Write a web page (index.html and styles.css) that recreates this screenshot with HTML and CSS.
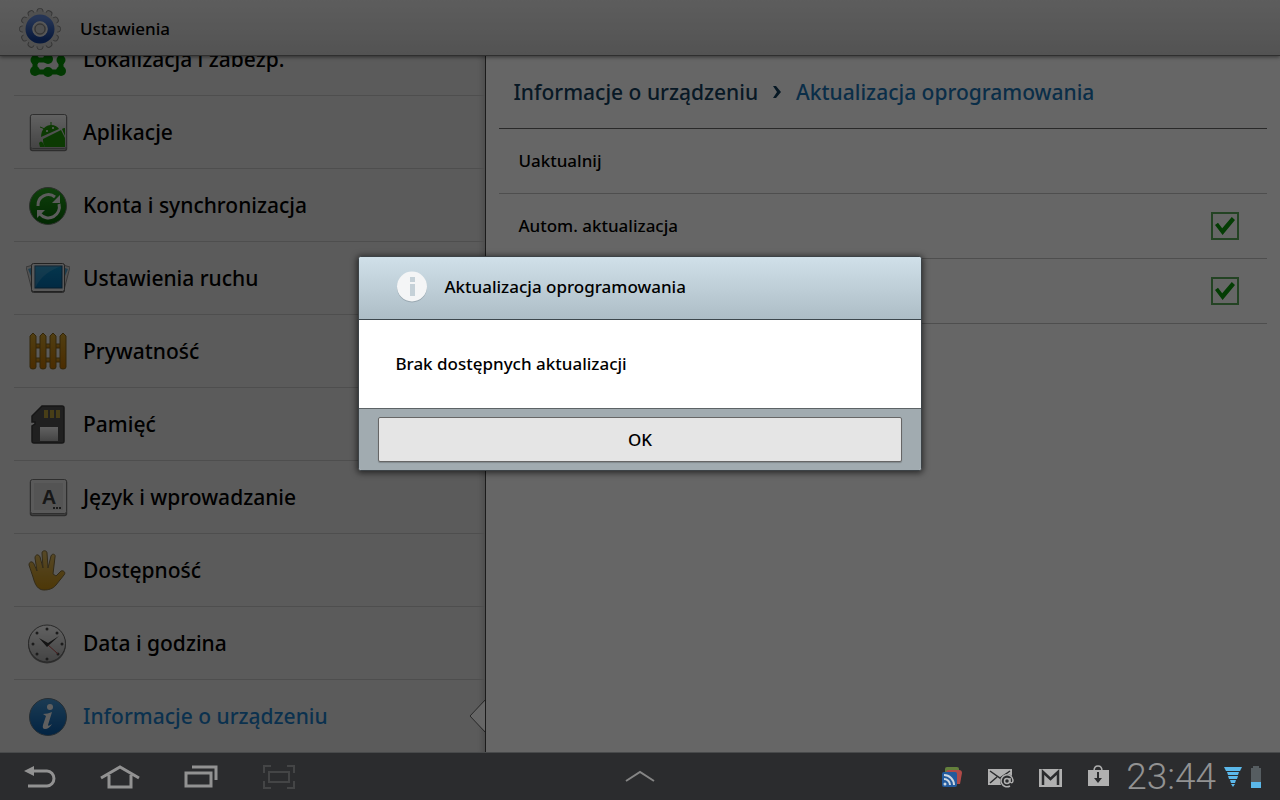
FILE: index.html
```html
<!DOCTYPE html>
<html lang="pl">
<head>
    <meta charset="UTF-8">
    <meta name="viewport" content="width=device-width, initial-scale=1.0">
    <title>Ustawienia</title>
    <link rel="stylesheet" href="styles.css">
</head>
<body>
    <div class="screen">
        <header class="title-bar">
            <svg class="icon" viewBox="0 0 44 44">
                <defs>
                    <linearGradient id="silver" x1="0" y1="0" x2="0" y2="1"><stop offset="0" stop-color="#f4f4f4"/><stop offset="1" stop-color="#aaa"/></linearGradient>
                    <linearGradient id="ring" x1="0" y1="0" x2="0" y2="1"><stop offset="0" stop-color="#5f86d4"/><stop offset="1" stop-color="#153f96"/></linearGradient>
                </defs>
                <g fill="#c8c8c8" stroke="#888">
                    <rect x="19" y="1.500" width="6" height="41" rx="2.500"/>
                    <rect x="19" y="1.500" width="6" height="41" rx="2.500" transform="rotate(30 22 22)"/>
                    <rect x="19" y="1.500" width="6" height="41" rx="2.500" transform="rotate(60 22 22)"/>
                    <rect x="19" y="1.500" width="6" height="41" rx="2.500" transform="rotate(90 22 22)"/>
                    <rect x="19" y="1.500" width="6" height="41" rx="2.500" transform="rotate(120 22 22)"/>
                    <rect x="19" y="1.500" width="6" height="41" rx="2.500" transform="rotate(150 22 22)"/>
                </g>
                <circle cx="22" cy="22" r="17.500" fill="#c8c8c8"/>
                <circle cx="22" cy="22" r="11" fill="#bbb" stroke="url(#ring)" stroke-width="7"/>
                <circle cx="22" cy="22" r="7" fill="none" stroke="#ddd" stroke-width="1.500"/>
                <circle cx="22" cy="22" r="5" fill="#c8c8c8" stroke="#777"/>
            </svg>
            <h1 class="title">Ustawienia</h1>
        </header>

        <main class="content">
            <nav class="sidebar">
                <a class="item" href="#">
                    <svg class="icon" viewBox="0 0 44 44">
                        <g stroke="#059005" stroke-width="5" fill="none"><path d="M9 11H35V35H9ZM22 11V23M9 23H20"/></g>
                        <g fill="#059005"><circle cx="9" cy="11" r="4.500"/><circle cx="22" cy="11" r="4.500"/><circle cx="35" cy="11" r="4.500"/><circle cx="9" cy="23" r="4.500"/><circle cx="22" cy="22" r="5"/><circle cx="35" cy="23" r="4.500"/><circle cx="9" cy="34" r="5"/><circle cx="22" cy="35" r="5"/><circle cx="35" cy="34" r="5"/></g>
                    </svg>
                    <span>Lokalizacja i zabezp.</span>
                </a>
                <a class="item" href="#">
                    <svg class="icon" viewBox="0 0 44 44">
                        <rect x="4.500" y="5.500" width="36" height="35" rx="2" fill="#b5b5b5" stroke="#707070" stroke-width="1.500"/>
                        <rect x="4.500" y="4.500" width="36" height="34" rx="2" fill="url(#silver)" stroke="#777"/>
                        <g fill="#1f9208">
                            <path d="M15 27C15 19 20 15 25 15C29 15 32 17 33 19Z"/>
                            <path d="M17 29L35 20L39 28V37H19C17 34 17 31 17 29Z"/>
                            <path d="M13 33Q15 30 17 33L19 37H14ZM36 19Q37 18 39 18V26Z"/>
                        </g>
                        <path d="M19 19L14 17M25 16V12" stroke="#1f9208"/>
                        <circle cx="21" cy="21" r="1" fill="#eee"/><circle cx="27" cy="18" r="1" fill="#eee"/>
                    </svg>
                    <span>Aplikacje</span>
                </a>
                <a class="item" href="#">
                    <svg class="icon" viewBox="0 0 44 44">
                        <defs><linearGradient id="green" x1="0" y1="0" x2="0" y2="1"><stop offset="0" stop-color="#25a01d"/><stop offset="1" stop-color="#056205"/></linearGradient></defs>
                        <circle cx="22" cy="23" r="18.500" fill="url(#green)" stroke="#6b776b"/>
                        <g fill="none" stroke="#e6e6e6" stroke-width="3"><path d="M12 23A10.500 10.500 0 0 1 29 14M33 21A11 11 0 0 1 14 31"/></g>
                        <path d="M34 12V20H26ZM11 35V27H19Z" fill="#e6e6e6"/>
                    </svg>
                    <span>Konta i synchronizacja</span>
                </a>
                <a class="item" href="#">
                    <svg class="icon" viewBox="0 0 44 44">
                        <defs><linearGradient id="screen" x1="0" y1="0" x2="0" y2="1"><stop offset="0" stop-color="#0b87c0"/><stop offset="1" stop-color="#056aa8"/></linearGradient></defs>
                        <path d="M0 11L7 9L12 35L6 34ZM44 11L37 9L32 35L38 34Z" fill="#d0d0d0" stroke="#8a8a8a"/>
                        <path d="M2 13L8 11L10 32ZM42 13L36 11L34 32Z" fill="#4f9cc4"/>
                        <rect x="5.500" y="8.500" width="33" height="28" rx="2" fill="#999" stroke="#6b6b6b"/>
                        <rect x="5.500" y="7.500" width="33" height="28" rx="2" fill="#dedede" stroke="#555"/>
                        <rect x="9" y="10" width="27" height="22" fill="url(#screen)" stroke="#154a70"/>
                        <path d="M9 10H36C24 14 15 20 9 32Z" fill="#fff" opacity=".15"/>
                    </svg>
                    <span>Ustawienia ruchu</span>
                </a>
                <a class="item" href="#">
                    <svg class="icon" viewBox="0 0 44 44">
                        <defs><linearGradient id="wood" x1="0" y1="0" x2="0" y2="1"><stop offset="0" stop-color="#c99d2d"/><stop offset="1" stop-color="#bd7003"/></linearGradient></defs>
                        <g fill="url(#wood)" stroke="#80601d">
                            <rect x="6" y="15" width="32" height="4"/><rect x="6" y="29" width="32" height="4"/>
                            <path d="M4 7L7 4L10 7V38Q10 40 7 40Q4 40 4 38Z"/>
                            <path d="M14 7L17 4L20 7V38Q20 40 17 40Q14 40 14 38Z"/>
                            <path d="M24 7L27 4L30 7V38Q30 40 27 40Q24 40 24 38Z"/>
                            <path d="M34 7L37 4L40 7V38Q40 40 37 40Q34 40 34 38Z"/>
                        </g>
                    </svg>
                    <span>Prywatność</span>
                </a>
                <a class="item" href="#">
                    <svg class="icon" viewBox="0 0 44 44">
                        <path d="M16 4H36Q38 4 38 6V39Q38 41 36 41H8Q6 41 6 39V24L9 22V20H6V14Z" fill="#505050" stroke="#383838" stroke-width="1.500"/>
                        <path d="M18 8H22V16H18ZM24 8H28V16H24ZM30 8H34V16H30Z" fill="#b59b3a"/>
                        <rect x="14" y="25" width="18" height="14" fill="url(#silver)"/>
                    </svg>
                    <span>Pamięć</span>
                </a>
                <a class="item" href="#">
                    <svg class="icon" viewBox="0 0 44 44">
                        <rect x="4.500" y="5.500" width="36" height="35" rx="2" fill="#aaa" stroke="#707070" stroke-width="1.500"/>
                        <rect x="4.500" y="4.500" width="36" height="34" rx="2" fill="#e2e2e2" stroke="#777"/>
                        <rect x="8" y="8" width="29" height="27" fill="#d2d2d2"/>
                        <text class="key-letter" x="23" y="29" text-anchor="middle">A</text>
                        <path d="M27 32h2v2h-2zM30 32h2v2h-2zM33 32h2v2h-2z" fill="#444"/>
                    </svg>
                    <span>Język i wprowadzanie</span>
                </a>
                <a class="item" href="#">
                    <svg class="icon" viewBox="0 0 44 44">
                        <defs><linearGradient id="skin" x1="0" y1="0" x2="0" y2="1"><stop offset="0" stop-color="#d9b763"/><stop offset="1" stop-color="#c08a12"/></linearGradient></defs>
                        <path d="M7 29L3 17C3 13 7 13 8 16L11 23L9 10C9 6 13 6 14 9L17 20L16 5C16 2 21 2 21 5L22 20L25 8C26 5 30 6 29 9L27 26L30 28L35 23C38 22 40 25 38 27L30 37C27 41 22 42 18 42C12 42 9 37 7 29Z" fill="url(#skin)" stroke="#7d6a3d"/>
                    </svg>
                    <span>Dostępność</span>
                </a>
                <a class="item" href="#">
                    <svg class="icon" viewBox="0 0 44 44">
                        <circle cx="21" cy="23.500" r="19" fill="#777"/>
                        <circle cx="21" cy="22.500" r="18.500" fill="url(#silver)" stroke="#666"/>
                        <g fill="#484848"><circle cx="21" cy="8" r="1.500"/><circle cx="31" cy="12" r="1.500"/><circle cx="36" cy="23" r="1.500"/><circle cx="32" cy="33" r="1.500"/><circle cx="21" cy="38" r="1.500"/><circle cx="11" cy="33" r="1.500"/><circle cx="7" cy="23" r="1.500"/><circle cx="11" cy="12" r="1.500"/></g>
                        <path d="M21 23L32 33" stroke="#a44"/>
                        <path d="M13 17L22 22L33 15L21 26Z" fill="#333"/>
                    </svg>
                    <span>Data i godzina</span>
                </a>
                <a class="item active" href="#">
                    <svg class="icon" viewBox="0 0 44 44">
                        <defs><linearGradient id="blue" x1="0" y1="0" x2="0" y2="1"><stop offset="0" stop-color="#4694d0"/><stop offset="1" stop-color="#0558a5"/></linearGradient></defs>
                        <circle cx="22" cy="23" r="18.500" fill="url(#blue)" stroke="#5d7180"/>
                        <circle cx="24" cy="13" r="3" fill="#eee"/>
                        <path d="M17 20Q22 20 26 18L22 31Q22 33 26 30Q23 35 19 35Q16 35 17 31L20 22Z" fill="#eee"/>
                    </svg>
                    <span>Informacje o urządzeniu</span>
                    <svg class="notch" viewBox="0 0 17 34"><path d="M17 1L1 17L17 33Z" fill="#fff"/><path d="M16 1L1 17L16 33" fill="none" stroke="#666"/></svg>
                </a>
            </nav>

            <section class="panel">
                <div class="breadcrumb">
                    <a class="crumb" href="#">Informacje o urządzeniu</a>
                    <svg class="arrow" viewBox="0 0 10 14"><path d="M1 1H4L9 7L4 13H1L5 7Z" fill="#14405e"/></svg>
                    <span class="crumb current">Aktualizacja oprogramowania</span>
                </div>
                <div class="row">
                    <span>Uaktualnij</span>
                </div>
                <div class="row">
                    <label for="autoUpdate">Autom. aktualizacja</label>
                    <input class="check" type="checkbox" id="autoUpdate" checked>
                </div>
                <div class="row">
                    <input class="check" type="checkbox" id="wifiOnly" aria-label="Tylko Wi-Fi" checked>
                </div>
            </section>
        </main>

        <div class="overlay">
            <div class="dialog" role="dialog" aria-labelledby="dialogTitle">
                <div class="dialog-header">
                    <svg class="dialog-icon" viewBox="0 0 32 32">
                        <circle cx="16" cy="16.500" r="15" fill="#98a7b0"/>
                        <circle cx="16" cy="15.500" r="15" fill="#f4f5f6"/>
                        <path d="M14 6h5v5h-5zM14 13h5v12h-5z" fill="#c5d1d8"/>
                    </svg>
                    <h2 class="title" id="dialogTitle">Aktualizacja oprogramowania</h2>
                </div>
                <p class="dialog-text">Brak dostępnych aktualizacji</p>
                <div class="dialog-footer">
                    <button class="ok-button">OK</button>
                </div>
            </div>
        </div>
    </div>

    <footer class="system-bar">
        <div class="nav-buttons">
            <button class="nav-button" aria-label="Wstecz">
                <svg width="40" height="32" viewBox="0 0 40 32"><path d="M12 10H27A6.500 7 0 0 1 27 25H8" fill="none" stroke="#929292" stroke-width="3"/><path d="M4 10L14 5V15Z" fill="#929292"/></svg>
            </button>
            <button class="nav-button" aria-label="Ekran główny">
                <svg width="40" height="32" viewBox="0 0 40 32"><path d="M1 17L20 6L39 17M9 14V26H31V14" fill="none" stroke="#929292" stroke-width="3"/></svg>
            </button>
            <button class="nav-button" aria-label="Ostatnie aplikacje">
                <svg width="40" height="32" viewBox="0 0 40 32"><path d="M6 12H31V25H6Z" fill="none" stroke="#929292" stroke-width="3"/><path d="M12 6H36V19" fill="none" stroke="#929292" stroke-width="3"/></svg>
            </button>
            <button class="nav-button" aria-label="Zrzut ekranu">
                <svg width="40" height="32" viewBox="0 0 40 32"><path d="M4 12V5H11M27 5H34V12M34 20V27H27M11 27H4V20M9 11H29V21H9Z" fill="none" stroke="#444546" stroke-width="2"/></svg>
            </button>
        </div>
        <button class="nav-button" aria-label="Panel aplikacji">
            <svg width="32" height="16" viewBox="0 0 32 16"><path d="M2 12L16 3L30 12" fill="none" stroke="#858585" stroke-width="2"/></svg>
        </button>
        <div class="status">
            <svg class="status-icon" viewBox="0 0 24 24">
                <path d="M7 4Q7 2 9 2H19Q21 2 21 4V10H7Z" fill="#64803c"/>
                <path d="M8 8Q8 5 11 5H21Q24 5 24 8L22 19H14Z" fill="#b04a48"/>
                <rect x="4" y="7" width="15" height="15" rx="2" fill="#235a9c"/>
                <g fill="none" stroke="#ccd6e0" stroke-width="2"><path d="M6 14A6 6 0 0 1 12 20M6 10A10 10 0 0 1 16 20"/></g><circle cx="7" cy="19" r="1.500" fill="#ccd6e0"/>
            </svg>
            <svg class="status-icon wide" viewBox="0 0 28 24">
                <rect x="2" y="4" width="24" height="16" fill="#b0b0b0"/>
                <path d="M4 6L14 13L24 6M4 18L11 12" fill="none" stroke="#2b2c2e" stroke-width="1.500"/>
                <circle cx="21" cy="16" r="7" fill="#2b2c2e"/>
                <g fill="none" stroke="#b0b0b0" stroke-width="1.500"><circle cx="21" cy="16" r="2.500"/><path d="M24 13V17Q27 19 27 15A6 6 0 1 0 24 21"/></g>
            </svg>
            <svg class="status-icon" viewBox="0 0 24 24"><rect x="1" y="4" width="23" height="18" fill="#b0b0b0"/><path d="M5 20V7L12.500 14L20 7V20" fill="none" stroke="#2b2c2e" stroke-width="2.500"/></svg>
            <svg class="status-icon" viewBox="0 0 24 24"><path d="M8 6Q8 1 12 1Q16 1 16 6" fill="none" stroke="#b0b0b0" stroke-width="1.500"/><rect x="2" y="5" width="21" height="16" fill="#b0b0b0"/><path d="M12 7V16" stroke="#2b2c2e" stroke-width="2"/><path d="M8 13H16L12 18Z" fill="#2b2c2e"/></svg>
            <span class="clock">23:44</span>
            <div class="signals">
                <svg width="18" height="20" viewBox="0 0 18 20"><path d="M0 0H18L16 4H2ZM3 5H15L14 8H4ZM4 9H14L13 12H5ZM6 13H12L11 16H7ZM7 17H11L9 20Z" fill="#5bb8ea"/></svg>
                <svg width="12" height="22" viewBox="0 0 12 22"><path d="M3 0H9V2H11V22H1V2H3Z" fill="#565d61"/><path d="M1 16H11V22H1Z" fill="#5bb8ea"/></svg>
            </div>
        </div>
    </footer>
</body>
</html>
```

FILE: styles.css
```css
body {
    margin: 0;
    height: 100vh;
    display: flex;
    flex-direction: column;
    overflow: hidden;
    font-family: "Noto Sans", "Open Sans", sans-serif;
    font-size: 17px;
    font-weight: 500;
    line-height: 24px;
    color: #000;
    background: #2b2c2e;
}

a {
    color: inherit;
    text-decoration: none;
}

.screen {
    position: relative;
    flex: 1;
    min-height: 0;
    display: flex;
    flex-direction: column;
}

.title-bar {
    position: relative;
    z-index: 1;
    display: flex;
    align-items: center;
    gap: 18px;
    padding: 7px 18px 4px;
    background: linear-gradient(to bottom, #e8e8e8 0%, #cfcfcf 100%);
    border-bottom: 1px solid #777;
    box-shadow: 0 1px 4px rgba(0, 0, 0, 0.5);
}

.title {
    margin: 0;
    font-size: 17px;
    font-weight: 500;
}

.icon {
    width: 44px;
    height: 44px;
    flex-shrink: 0;
}

.content {
    flex: 1;
    min-height: 0;
    display: flex;
}

/* the list is scrolled to its end */
.sidebar {
    width: 38%;
    box-sizing: border-box;
    padding-left: 14px;
    display: flex;
    flex-direction: column;
    justify-content: flex-end;
    overflow: hidden;
    background: #e4e4e4;
    border-right: 1px solid #444;
    box-shadow: inset -6px 0 6px -4px rgba(0, 0, 0, 0.2);
    font-size: 21px;
    line-height: 30px;
}

.item {
    position: relative;
    display: flex;
    align-items: center;
    gap: 13px;
    padding: 14px 12px;
    border-top: 1px solid #c4c4c4;
}

.active {
    color: #1c7cc4;
}

.key-letter {
    font-family: "Liberation Sans", Arial, sans-serif;
    font-size: 20px;
    font-weight: 700;
    fill: #3c3c3c;
}

.notch {
    position: absolute;
    right: -1px;
    top: 19px;
    width: 17px;
    height: 34px;
}

.panel {
    flex: 1;
    padding: 0 13px;
    background: #fff;
}

.breadcrumb {
    display: flex;
    align-items: center;
    gap: 14px;
    padding: 21px 14px;
    border-bottom: 1px solid #666;
    font-size: 21px;
    line-height: 30px;
}

.crumb {
    color: #14405e;
}

.current {
    color: #1a73b4;
}

.arrow {
    width: 10px;
    height: 14px;
}

.row {
    display: flex;
    align-items: center;
    justify-content: space-between;
    min-height: 28px;
    padding: 18px 28px 18px 19px;
    border-bottom: 1px solid #c4c4c4;
}

.check {
    appearance: none;
    width: 28px;
    height: 28px;
    margin: 0 0 0 auto;
    border: 2px solid #58a858;
    display: grid;
    place-items: center;
}

.check:checked::before {
    content: "";
    width: 20px;
    height: 18px;
    background: #0c980c;
    clip-path: polygon(0 45%, 15% 32%, 36% 62%, 84% 0, 100% 16%, 38% 100%);
}

.overlay {
    position: absolute;
    inset: 0;
    z-index: 2;
    display: flex;
    align-items: center;
    justify-content: center;
    padding-bottom: 26px;
    background: rgba(0, 0, 0, 0.6);
}

.dialog {
    width: 44%;
    box-sizing: border-box;
    border: 1px solid #3c4246;
    border-radius: 3px;
    overflow: hidden;
    background: #fff;
    box-shadow: 0 1px 6px 1px rgba(0, 0, 0, 0.6);
}

.dialog-header {
    display: flex;
    align-items: center;
    gap: 16px;
    padding: 14px 37px 16px;
    background: linear-gradient(to bottom, #d0e0e9 0%, #adbdc6 100%);
    border-bottom: 1px solid #3d474d;
}

.dialog-icon {
    width: 32px;
    height: 32px;
}

.dialog-text {
    margin: 0;
    padding: 32px 36px;
}

.dialog-footer {
    padding: 8px 19px;
    background: #a1abb0;
    border-top: 1px solid #5d6366;
}

.ok-button {
    display: block;
    width: 100%;
    padding: 10px;
    border: 1px solid #666;
    border-radius: 2px;
    background: #e5e5e5;
    font-family: inherit;
    font-size: 17px;
    font-weight: 500;
    line-height: 23px;
    color: #000;
    box-shadow: 0 1px 1px rgba(0, 0, 0, 0.2);
}

.system-bar {
    display: grid;
    grid-template-columns: 1fr auto 1fr;
    align-items: center;
    border-top: 1px solid #484a4b;
    background: #2b2c2e;
}

.nav-buttons {
    display: flex;
}

.nav-button {
    width: 80px;
    height: 47px;
    padding: 0;
    border: 0;
    background: none;
    display: grid;
    place-items: center;
}

.status {
    display: flex;
    align-items: center;
    justify-content: flex-end;
    gap: 24px;
    padding-right: 18px;
}

.status-icon {
    width: 24px;
    height: 24px;
}

.wide {
    width: 28px;
}

.clock {
    margin-left: -8px;
    font-family: Roboto, "Liberation Sans", sans-serif;
    font-size: 37px;
    font-weight: 300;
    line-height: 47px;
    color: #929292;
}

.signals {
    display: flex;
    align-items: center;
    gap: 8px;
    margin-left: -16px;
}
```
